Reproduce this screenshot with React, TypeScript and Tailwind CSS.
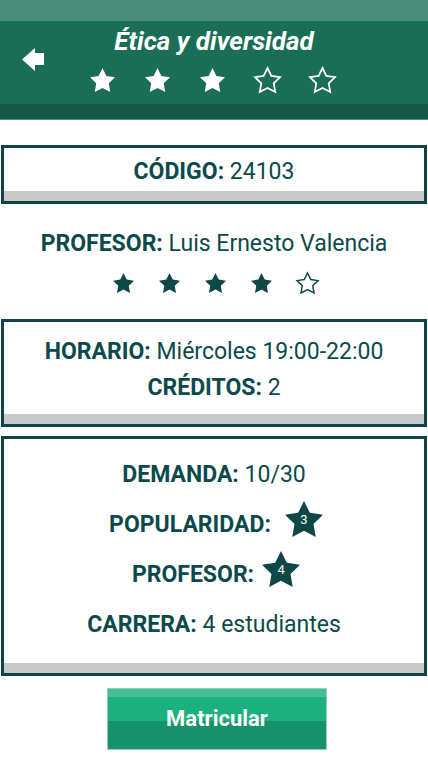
import React from "react";

const STAR = "12,2 15.09,8.26 22,9.27 17,14.14 18.18,21.02 12,17.77 5.82,21.02 7,14.14 2,9.27 8.91,8.26";

function Star({
  filled,
  color,
  w,
  h,
  stroke = 1.3,
}: {
  filled: boolean;
  color: string;
  w: number;
  h: number;
  stroke?: number;
}) {
  return (
    <svg
      width={w}
      height={h}
      viewBox="2 2 20 19.02"
      preserveAspectRatio="none"
      className="overflow-visible shrink-0"
    >
      <polygon
        points={STAR}
        fill={filled ? color : "none"}
        stroke={filled ? "none" : color}
        strokeWidth={stroke}
        strokeLinejoin="miter"
      />
    </svg>
  );
}

function Badge({ n }: { n: number }) {
  return (
    <div className="relative w-[38px] h-[48px] shrink-0">
      <svg
        width={38}
        height={36}
        viewBox="2 2 20 19.02"
        preserveAspectRatio="none"
        className="absolute left-0 top-0"
      >
        <polygon points={STAR} fill="#0d4748" />
      </svg>
      <span className="absolute left-0 top-[12px] w-[38px] text-center text-[13px] leading-[14px] text-white font-normal">
        {n}
      </span>
    </div>
  );
}

function Card({ children, inner }: { children: React.ReactNode; inner: string }) {
  return (
    <div className="mx-px border-[3px] border-[#0c4547] bg-white">
      <div className={inner}>{children}</div>
      <div className="h-[10px] bg-[#c9c9c9]" />
    </div>
  );
}

export default function App() {
  const font = { fontFamily: "Roboto, 'Noto Sans', sans-serif" };
  return (
    <div className="w-[428px] h-[760px] bg-white text-[#0b4a4b] overflow-hidden" style={font}>
      {/* Header */}
      <div>
        <div className="h-[21px] bg-[#4a8d79]" />
        <div className="relative h-[83px] bg-[#1a6e55] flex flex-col items-center pt-[6px]">
          <svg
            width={22}
            height={23}
            viewBox="0 0 22 23"
            className="absolute left-[22px] top-[27px]"
          >
            <polygon points="0,11.5 13,0 13,5 22,5 22,17 13,17 13,23" fill="#fff" />
          </svg>
          <div className="text-[26px] leading-[28px] font-bold italic text-white">
            Ética y diversidad
          </div>
          <div className="mt-[13px] flex gap-[30px] pr-[3px]">
            <Star filled color="#fff" w={25} h={24} />
            <Star filled color="#fff" w={25} h={24} />
            <Star filled color="#fff" w={25} h={24} />
            <Star filled={false} color="#fff" w={25} h={24} stroke={1.4} />
            <Star filled={false} color="#fff" w={25} h={24} stroke={1.4} />
          </div>
        </div>
        <div className="h-[15px] bg-[#165a45]" />
        <div className="h-px bg-[#4f9480]" />
      </div>

      {/* Código */}
      <div className="mt-[25px]">
        <Card inner="pt-[12px] pb-[7px] text-center text-[23px] leading-[24px]">
          <span className="font-bold">CÓDIGO:</span> 24103
        </Card>
      </div>

      {/* Profesor */}
      <div className="mt-[26px] flex flex-col items-center">
        <div className="text-[23px] leading-[28px]">
          <span className="font-bold">PROFESOR:</span> Luis Ernesto Valencia
        </div>
        <div className="mt-[15px] flex gap-[25px] pl-[2px]">
          <Star filled color="#0d4748" w={21} h={20} />
          <Star filled color="#0d4748" w={21} h={20} />
          <Star filled color="#0d4748" w={21} h={20} />
          <Star filled color="#0d4748" w={21} h={20} />
          <Star filled={false} color="#0d4748" w={21} h={20} stroke={1.4} />
        </div>
      </div>

      {/* Horario */}
      <div className="mt-[26px]">
        <Card inner="pt-[12px] pb-[8px] text-center text-[23px] leading-[36px]">
          <div>
            <span className="font-bold">HORARIO:</span> Miércoles 19:00-22:00
          </div>
          <div>
            <span className="font-bold">CRÉDITOS:</span> 2
          </div>
        </Card>
      </div>

      {/* Demanda */}
      <div className="mt-[9px]">
        <Card inner="pt-[11px] pb-[13px] text-center text-[23px] leading-[50px]">
          <div className="h-[50px]">
            <span className="font-bold">DEMANDA:</span> 10/30
          </div>
          <div className="h-[50px] flex items-center justify-center pl-[4px]">
            <span className="font-bold">POPULARIDAD:</span>
            <div className="ml-[14px]">
              <Badge n={3} />
            </div>
          </div>
          <div className="h-[50px] flex items-center justify-center pl-[4px]">
            <span className="font-bold">PROFESOR:</span>
            <div className="ml-[8px]">
              <Badge n={4} />
            </div>
          </div>
          <div className="h-[50px]">
            <span className="font-bold">CARRERA:</span> 4 estudiantes
          </div>
        </Card>
      </div>

      {/* Button */}
      <div className="mt-[12px] flex justify-center pl-[6px]">
        <div className="w-[220px] h-[62px] border border-[#8fd2bb] flex flex-col relative">
          <div className="h-[8px] bg-[#47be97]" />
          <div className="h-[24px] bg-[#1bb07e]" />
          <div className="flex-1 bg-[#17916a]" />
          <div className="absolute inset-0 flex items-center justify-center text-white font-bold text-[22px] leading-[24px]">
            Matricular
          </div>
        </div>
      </div>
    </div>
  );
}
